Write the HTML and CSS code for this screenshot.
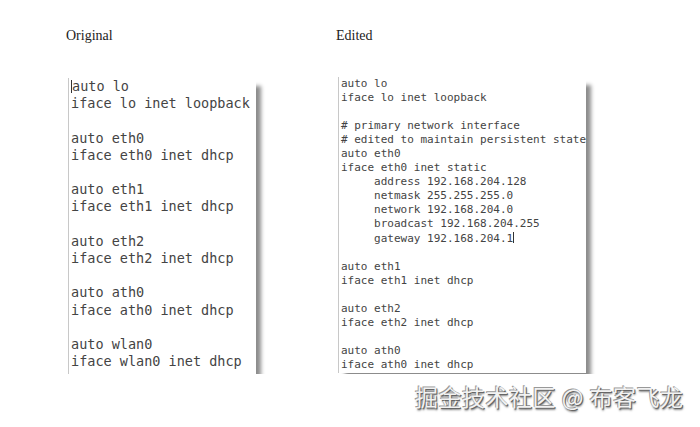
FILE: index.html
```html
<!DOCTYPE html>
<html>
<head>
<meta charset="utf-8">
<link rel="stylesheet" href="styles.css">
</head>
<body>
<div class="page">
  <section class="col col-left">
    <h2 class="title">Original</h2>
    <pre class="term term-big"><span class="caret"></span>auto lo
iface lo inet loopback

auto eth0
iface eth0 inet dhcp

auto eth1
iface eth1 inet dhcp

auto eth2
iface eth2 inet dhcp

auto ath0
iface ath0 inet dhcp

auto wlan0
iface wlan0 inet dhcp</pre>
  </section>
  <section class="col col-right">
    <h2 class="title">Edited</h2>
    <pre class="term term-small">auto lo
iface lo inet loopback

# primary network interface
# edited to maintain persistent state
auto eth0
iface eth0 inet static
     address 192.168.204.128
     netmask 255.255.255.0
     network 192.168.204.0
     broadcast 192.168.204.255
     gateway 192.168.204.1<span class="caret"></span>

auto eth1
iface eth1 inet dhcp

auto eth2
iface eth2 inet dhcp

auto ath0
iface ath0 inet dhcp</pre>
  </section>
</div>
<div class="watermark">掘金技术社区 @ 布客飞龙</div>
</body>
</html>
```

FILE: styles.css
```css
html, body {
  margin: 0;
  padding: 0;
  background: #ffffff;
}

.page {
  display: flex;
  padding-top: 28px;
}

.col-left {
  margin-left: 66px;
  width: 270px;
}

.col-right {
  margin-left: 0;
  width: 270px;
}

.title {
  margin: 0;
  font-family: "Liberation Serif", "DejaVu Serif", serif;
  font-weight: normal;
  font-size: 14px;
  line-height: 16px;
  color: #222;
}

.term {
  margin: 0;
  font-family: "DejaVu Sans Mono", monospace;
  color: #444;
  background: #fff;
  border-left: 1px solid #c8c8c8;
  box-shadow: 6px 7px 4px -1px rgba(0, 0, 0, 0.45);
  white-space: pre;
}

.term-big {
  margin-top: 34px;
  margin-left: 2px;
  width: 185px;
  padding: 0 0 4px 2px;
  font-size: 13.5px;
  line-height: 17.2px;
}

.term-small {
  margin-top: 33px;
  margin-left: 2px;
  width: 245px;
  padding: 0 0 1px 2px;
  font-size: 11px;
  line-height: 14.05px;
}

.caret {
  display: inline-block;
  width: 0;
  height: 1em;
  border-left: 1px solid #333;
  vertical-align: -0.15em;
}

.watermark {
  position: absolute;
  left: 415px;
  top: 382px;
  font-family: "Noto Sans CJK SC", sans-serif;
  font-size: 23px;
  letter-spacing: 0.5px;
  line-height: 28px;
  color: #f2f2f2;
  text-shadow: 1px 1px 0 #666, -1px -1px 0 #999, 1px 2px 2px #777;
  white-space: nowrap;
}
```
